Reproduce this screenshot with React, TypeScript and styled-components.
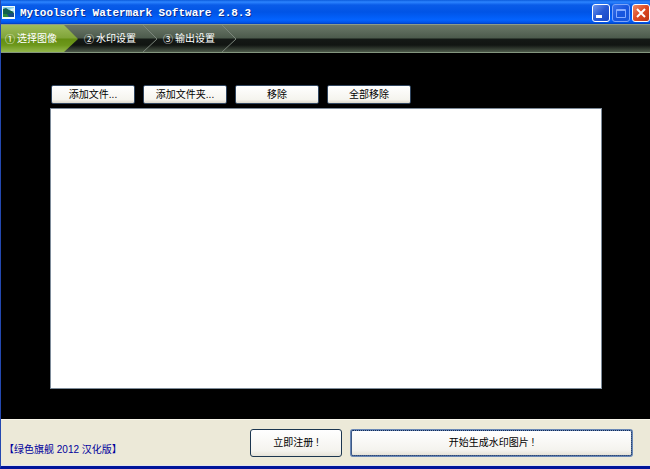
import React from "react";
import styled, { createGlobalStyle } from "styled-components";

const GlobalStyle = createGlobalStyle`
  * { box-sizing: border-box; }
  body {
    margin: 0;
    font-family: "Liberation Sans", "Noto Sans CJK SC", sans-serif;
    font-size: 10px;
    line-height: 14px;
  }
  button { font: inherit; margin: 0; }
`;

const Window = styled.div`
  display: flex;
  flex-direction: column;
  min-height: 100vh;
  background: #000;
  border-left: 1px solid #2448b0;
  border-bottom: 3px solid #00149a;
`;

const TitleBar = styled.header`
  display: flex;
  align-items: center;
  gap: 4px;
  height: 24px;
  padding: 1px 0 0 1px;
  background: linear-gradient(#0b5bdc 0, #2c84ff 2px, #0a5ce8 5px, #0054e6 12px, #0363ff 20px, #0050e0 23px, #0038b4 24px);
`;

const Title = styled.h1`
  flex: 1;
  margin: 0;
  color: #fff;
  font: bold 11px/14px "Liberation Mono", monospace;
  white-space: nowrap;
  text-shadow: 1px 1px 0 #0a2f90;
`;

const Controls = styled.div`
  display: flex;
  gap: 2px;
`;

const ControlButton = styled.button<{ $kind: "normal" | "dim" | "close" }>`
  display: flex;
  width: 18px;
  height: 18px;
  padding: 0;
  color: ${(p) => (p.$kind === "dim" ? "#82aaff" : "#fff")};
  border: 1px solid ${(p) => (p.$kind === "dim" ? "#7da5f8" : "#fff")};
  border-radius: 3px;
  background: ${(p) =>
    p.$kind === "close"
      ? "linear-gradient(135deg, #ee8b69, #dd4822 50%, #bd3413)"
      : p.$kind === "dim"
        ? "linear-gradient(135deg, #3a73ed, #1755df 50%, #1656dc)"
        : "linear-gradient(135deg, #6f98ee, #2859d4 50%, #1946c5)"};
`;

const Steps = styled.nav`
  display: flex;
  height: 29px;
  border-top: 1px solid #8c9b89;
  border-bottom: 1px solid #84967f;
  background: linear-gradient(#6b7869 0, #4c5a4c 13px, #141916 14px, #111512 20px, #4c5949 27px);
`;

const Step = styled.button`
  position: relative;
  display: flex;
  align-items: center;
  width: 79px;
  padding: 1px 0 0 4px;
  border: 0;
  background: none;
  color: #fff;
  white-space: nowrap;
`;

const StepShape = styled.svg`
  position: absolute;
  inset: 0;
  width: 100%;
  height: 100%;
`;

const StepLabel = styled.span`
  position: relative;
  display: flex;
  align-items: center;
  gap: 2px;
`;

const StepNumber = styled.span`
  font-family: "Noto Sans CJK SC", sans-serif;
`;

const Content = styled.main`
  flex: 1;
  display: flex;
  flex-direction: column;
  gap: 4px;
  padding: 32px 48px 30px 49px;
`;

const Toolbar = styled.div`
  display: flex;
  gap: 8px;
  padding-left: 1px;
`;

const ToolButton = styled.button`
  width: 84px;
  height: 19px;
  padding: 0;
  color: #000;
  border: 1px solid #31465f;
  border-radius: 2px;
  background: linear-gradient(#fff, #f5f4ee 80%, #dcd8cb);
  white-space: nowrap;
`;

const FileList = styled.ul`
  flex: 1;
  margin: 0;
  padding: 0;
  list-style: none;
  background: #fff;
  border: 1px solid #7d8b99;
`;

const Footer = styled.footer`
  display: flex;
  align-items: flex-start;
  gap: 8px;
  height: 47px;
  padding: 9px 17px 0 3px;
  background: #ece9d8;
  border-top: 1px solid #f8f6ea;
  border-bottom: 1px solid #e2e4ee;
`;

const Credit = styled.a`
  flex: 0 0 238px;
  margin-top: 14px;
  color: #00009c;
  text-decoration: none;
  white-space: nowrap;
`;

const ActionButton = styled.button<{ $primary?: boolean }>`
  flex: ${(p) => (p.$primary ? "1" : "0 0 92px")};
  height: 28px;
  padding: 0;
  color: #000;
  border: ${(p) => (p.$primary ? "2px solid #6987b5" : "1px solid #1c3650")};
  border-radius: 3px;
  background: linear-gradient(#fff, #f4f3ee 80%, #e6e3d8);
  outline: ${(p) => (p.$primary ? "1px dotted #122c58" : "none")};
  outline-offset: -2px;
`;

function AppIcon() {
  return (
    <svg width="14" height="14" viewBox="0 0 14 14" aria-hidden="true">
      <rect width="13" height="13" fill="#f2fbfa" />
      <path d="M1 1h11v5H1z" fill="#8fd0e8" />
      <path d="M1 3l3-1 3 2 3 1 2 2v2H1z" fill="#12604e" />
      <path d="M8 3l4-1v3H9z" fill="#d8f3f8" />
      <path d="M1 8h7l4 1v2H1z" fill="#2a8a3c" />
      <path d="M5 8l7-1v4H7z" fill="#174a86" />
    </svg>
  );
}

const steps = [
  { number: "①", label: "选择图像" },
  { number: "②", label: "水印设置" },
  { number: "③", label: "输出设置" },
];

const tools = ["添加文件...", "添加文件夹...", "移除", "全部移除"];

export default function App() {
  return (
    <>
      <GlobalStyle />
      <Window>
        <TitleBar>
          <AppIcon />
          <Title>Mytoolsoft Watermark Software 2.8.3</Title>
          <Controls>
            <ControlButton $kind="normal" aria-label="最小化">
              <svg width="16" height="16"><path d="M3 10h6v3H3z" fill="currentColor" /></svg>
            </ControlButton>
            <ControlButton $kind="dim" aria-label="最大化">
              <svg width="16" height="16"><path d="M3.5 4.5h9v8h-9zM3 5.5h9" fill="none" stroke="currentColor" /></svg>
            </ControlButton>
            <ControlButton $kind="close" aria-label="关闭">
              <svg width="16" height="16"><path d="M4 4l8 8M12 4l-8 8" stroke="currentColor" strokeWidth="2" /></svg>
            </ControlButton>
          </Controls>
        </TitleBar>
        <Steps>
          {steps.map((step, index) => (
            <Step key={step.number} aria-current={index === 0 ? "step" : undefined}>
              <StepShape viewBox="0 0 79 27" preserveAspectRatio="none" aria-hidden="true">
                {index === 0 ? (
                  <>
                    <defs>
                      <linearGradient id="active-step" x2="0" y2="1">
                        <stop stopColor="#9dbb5c" />
                        <stop offset=".48" stopColor="#80a438" />
                        <stop offset=".52" stopColor="#648e12" />
                        <stop offset=".75" stopColor="#6d981b" />
                        <stop offset="1" stopColor="#94b84d" />
                      </linearGradient>
                    </defs>
                    <path d="M0 0h63l14 14-14 13H0z" fill="url(#active-step)" />
                  </>
                ) : (
                  <path d="M63 0l14 14-14 13" fill="none" stroke="#7b857b" />
                )}
              </StepShape>
              <StepLabel>
                <StepNumber>{step.number}</StepNumber>
                {step.label}
              </StepLabel>
            </Step>
          ))}
        </Steps>
        <Content>
          <Toolbar>
            {tools.map((tool) => (
              <ToolButton key={tool}>{tool}</ToolButton>
            ))}
          </Toolbar>
          <FileList aria-label="图像" />
        </Content>
        <Footer>
          <Credit href="#">【绿色旗舰 2012 汉化版】</Credit>
          <ActionButton>立即注册 !</ActionButton>
          <ActionButton $primary>开始生成水印图片 !</ActionButton>
        </Footer>
      </Window>
    </>
  );
}
